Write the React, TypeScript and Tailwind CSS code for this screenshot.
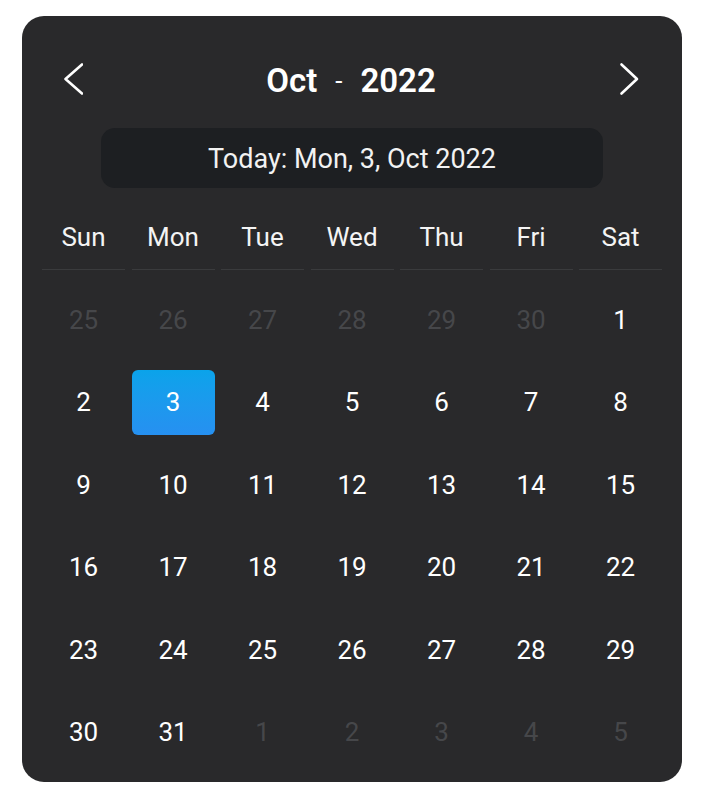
import React from "react";

const days = ["Sun", "Mon", "Tue", "Wed", "Thu", "Fri", "Sat"];

type Cell = { d: number; muted?: boolean; selected?: boolean };

const cells: Cell[] = [
  ...[25, 26, 27, 28, 29, 30].map((d) => ({ d, muted: true })),
  ...Array.from({ length: 31 }, (_, i) => ({ d: i + 1, selected: i + 1 === 3 })),
  ...[1, 2, 3, 4, 5].map((d) => ({ d, muted: true })),
];

export default function App() {
  return (
    <div className="min-h-[802px] w-[702px] bg-white pl-[22px] pt-[16px]" style={{ fontFamily: "Roboto, 'Noto Sans', sans-serif" }}>
      <div className="flex h-[766px] w-[660px] flex-col rounded-[22px] bg-[#29292b] px-[20px] pt-[39px] pb-[17px] text-white">
        <div className="flex h-[48px] items-center justify-between pl-[21px] pr-[23px]">
          <svg width="20" height="34" viewBox="0 0 20 34" fill="none">
            <path d="M19 2.5 L2.5 17 L19 31.5" stroke="#ffffff" strokeWidth="2.6" strokeLinecap="round" strokeLinejoin="round" />
          </svg>
          <div className="flex items-center pt-[3px] text-[33px] font-semibold leading-none text-white">
            <span>Oct</span>
            <span className="mx-[18px] text-[26px] font-normal">-</span>
            <span>2022</span>
          </div>
          <svg width="20" height="34" viewBox="0 0 20 34" fill="none">
            <path d="M2.5 2.5 L18 17 L2.5 31.5" stroke="#ffffff" strokeWidth="2.6" strokeLinecap="round" strokeLinejoin="round" />
          </svg>
        </div>
        <div className="mx-auto mt-[25px] flex h-[60px] w-[502px] items-center justify-center rounded-[14px] bg-[#1d1f22] pt-[3px] text-[27px] text-[#f2f2f2]">
          Today: Mon, 3, Oct 2022
        </div>
        <div className="mt-[17px] grid grid-cols-[repeat(7,83px)] auto-rows-[65px] gap-x-[6.5px] gap-y-[17.5px]">
          {days.map((d) => (
            <div key={d} className="flex items-center justify-center border-b border-[#3a3b3d] text-[26px] font-normal text-[#f4f4f4]">
              {d}
            </div>
          ))}
          {cells.map((c, i) => (
            <div
              key={i}
              className={
                c.selected
                  ? "flex items-center justify-center rounded-[6px] bg-gradient-to-b from-[#0aa3ea] to-[#2690f1] text-[26px] font-normal text-white"
                  : c.muted
                  ? "flex items-center justify-center text-[26px] font-normal text-[#46474a]"
                  : "flex items-center justify-center text-[26px] font-normal text-white"
              }
            >
              {c.d}
            </div>
          ))}
        </div>
      </div>
    </div>
  );
}
